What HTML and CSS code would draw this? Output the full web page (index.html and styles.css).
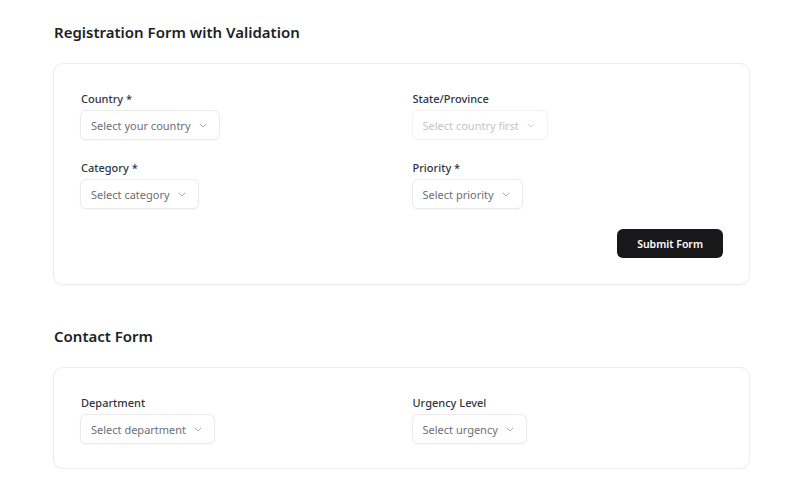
FILE: index.html
```html
<!DOCTYPE html>
<html lang="en">
<head>
<meta charset="utf-8">
<title>Forms</title>
<link rel="stylesheet" href="styles.css">
</head>
<body>
<main class="page">
  <section class="section">
    <h2 class="title">Registration Form with Validation</h2>
    <div class="card">
      <div class="grid">
        <div class="field">
          <label class="label">Country *</label>
          <div class="select"><span>Select your country</span><svg class="chev" viewBox="0 0 8 5"><path d="M1 1l3 3 3-3"/></svg></div>
        </div>
        <div class="field">
          <label class="label">State/Province</label>
          <div class="select disabled"><span>Select country first</span><svg class="chev" viewBox="0 0 8 5"><path d="M1 1l3 3 3-3"/></svg></div>
        </div>
        <div class="field">
          <label class="label">Category *</label>
          <div class="select"><span>Select category</span><svg class="chev" viewBox="0 0 8 5"><path d="M1 1l3 3 3-3"/></svg></div>
        </div>
        <div class="field">
          <label class="label">Priority *</label>
          <div class="select"><span>Select priority</span><svg class="chev" viewBox="0 0 8 5"><path d="M1 1l3 3 3-3"/></svg></div>
        </div>
      </div>
      <div class="actions">
        <button class="btn">Submit Form</button>
      </div>
    </div>
  </section>
  <section class="section second">
    <h2 class="title">Contact Form</h2>
    <div class="card compact">
      <div class="grid">
        <div class="field">
          <label class="label">Department</label>
          <div class="select"><span>Select department</span><svg class="chev" viewBox="0 0 8 5"><path d="M1 1l3 3 3-3"/></svg></div>
        </div>
        <div class="field">
          <label class="label">Urgency Level</label>
          <div class="select"><span>Select urgency</span><svg class="chev" viewBox="0 0 8 5"><path d="M1 1l3 3 3-3"/></svg></div>
        </div>
      </div>
    </div>
  </section>
</main>
</body>
</html>
```
FILE: styles.css
```css
* { box-sizing: border-box; }
html, body { margin: 0; background: #ffffff; }
body {
  font-family: "Noto Sans", "Open Sans", sans-serif;
  color: #1f2937;
}
.page {
  padding: 20px 50px 0 53px;
}
.title {
  margin: 0 0 19px 1px;
  font-size: 15px;
  line-height: 24px;
  font-weight: 600;
  color: #1c1f26;
}
.second { margin-top: 39px; }
.card {
  border: 1px solid #ececee;
  border-radius: 10px;
  padding: 27px 26px 26px 26px;
  box-shadow: 0 1px 2px rgba(0,0,0,0.03);
}
.card.compact { padding-bottom: 24px; }
.grid {
  display: grid;
  grid-template-columns: 1fr 1fr;
  column-gap: 20px;
  row-gap: 20px;
}
.field {
  display: flex;
  flex-direction: column;
  align-items: flex-start;
  gap: 3px;
}
.label {
  margin-left: 1px;
  font-size: 11px;
  line-height: 16px;
  font-weight: 500;
  color: #2f3541;
}
.select {
  display: flex;
  align-items: center;
  gap: 8px;
  height: 30px;
  padding: 0 12px 0 10px;
  border: 1px solid #ebebed;
  border-radius: 6px;
  box-shadow: 0 1px 2px rgba(0,0,0,0.04);
  font-size: 11px;
  color: #6e6e76;
  background: #fff;
}
.chev {
  width: 8px;
  height: 5px;
  fill: none;
  stroke: #a8a8b0;
  stroke-width: 1;
  stroke-linecap: round;
  stroke-linejoin: round;
}
.select.disabled {
  color: #c4c4c8;
  border-color: #f2f2f3;
  box-shadow: none;
}
.select.disabled .chev { stroke: #d4d4d8; }
.actions {
  display: flex;
  justify-content: flex-end;
  margin-top: 20px;
}
.btn {
  font-family: inherit;
  font-size: 10.5px;
  font-weight: 600;
  color: #ffffff;
  background: #18181b;
  border: none;
  border-radius: 6px;
  height: 29px;
  padding: 0 20px;
}
```
